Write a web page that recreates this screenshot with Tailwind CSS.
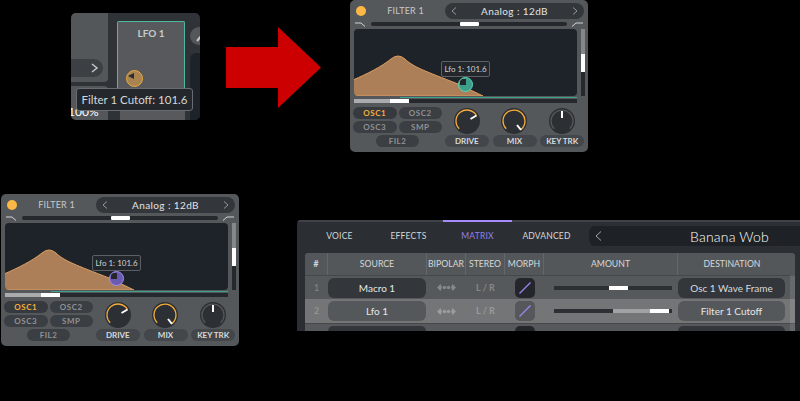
<!DOCTYPE html>
<html lang="en">
<head>
    <meta charset="UTF-8">
    <meta name="viewport" content="width=device-width, initial-scale=1.0">
    <title>Filter modulation</title>
    <script src="https://cdn.jsdelivr.net/npm/@tailwindcss/browser@4"></script>
</head>
<body class="bg-black">
<div class="relative w-[800px] h-[401px] overflow-hidden bg-black font-['Lato',sans-serif]">

    <!-- Cropped LFO thumbnail -->
    <div class="absolute left-[71px] top-[13px] w-[129px] h-[107px] rounded-[5px] overflow-hidden bg-[#2f3236] flex">
        <div class="w-[37px] shrink-0 flex flex-col">
            <div class="h-[69px] bg-[#54575a] rounded-br-[4px] pt-[46px]">
                <div class="h-[18px] w-[32px] bg-[#3c3f43] rounded-r-full flex items-center justify-end pr-[4px]">
                    <svg width="8" height="10" viewBox="0 0 8 10" fill="none" stroke="#c4c6c8" stroke-width="1.5"><path d="M1 1l5 4-5 4"/></svg>
                </div>
            </div>
            <div class="h-[34px] mt-[4px] bg-[#54575a] rounded-tr-[4px] flex items-end text-[12px] leading-[14px] text-white pb-[1px] -ml-[3px]">100%</div>
        </div>
        <div class="w-[9px] shrink-0"></div>
        <div class="w-[68px] shrink-0 mt-[8px] flex flex-col">
            <div class="h-[67px] border border-b-0 border-[#4fb8a2] rounded-t-[2px] bg-[#57595c] flex flex-col items-center">
                <div class="text-[10px] leading-[12px] font-bold text-[#c8cacc] mt-[5px]">LFO 1</div>
                <div class="self-start ml-[8px] mt-[31px] w-[17px] h-[17px] rounded-full border border-[#e8a93f] bg-[#a98450] relative overflow-hidden">
                    <div class="absolute left-[1px] top-[2px] w-0 h-0 border-y-[3px] border-y-transparent border-r-[6px] border-r-[#2a2d31]"></div>
                </div>
            </div>
            <div class="flex-1 bg-[#57595c] ml-[3px]"></div>
        </div>
        <div class="flex-1 pl-[5px] flex flex-col">
            <div class="h-[18px] w-[16px] rounded-l-full bg-[#54575a] mt-[14px] flex items-center justify-end">
                <svg width="10" height="12" viewBox="0 0 10 12" fill="none" stroke="#c4c6c8" stroke-width="2"><path d="M1 11l5-6"/><circle cx="7" cy="3" r="2"/></svg>
            </div>
            <div class="flex-1 mt-[8px] bg-[#1e2329] rounded-tl-[6px]"></div>
        </div>
        <div class="absolute left-[5px] top-[75px] h-[23px] w-[117px] rounded-[3px] border border-[#696c70] bg-[#24282d] text-[#d5d7d9] text-[11.5px] leading-[21px] text-center whitespace-nowrap">Filter 1 Cutoff: 101.6</div>
    </div>

    <!-- Red arrow -->
    <svg class="absolute left-[226px] top-[27px]" width="96" height="81" viewBox="0 0 96 81"><path d="M0 20h52V0l43 40.5L52 81V61H0z" fill="#cc0000"/></svg>

    <!-- Filter panel, teal modulation -->
    <div class="absolute left-[350px] top-0 w-[238px] h-[152px] rounded-[5px] bg-[#55585b] flex flex-col">
        <div class="flex items-center h-[16px] mt-[3px] pl-[6px] pr-[4px]">
            <div class="w-[10px] h-[10px] rounded-full bg-[#fdb744] shrink-0"></div>
            <div class="w-[79px] text-center text-[9px] tracking-[0.2px] text-[#c7c9cb]">FILTER 1</div>
            <div class="flex-1 h-[16px] rounded-full bg-[#33373b] flex items-center justify-between px-[6px] text-[#e2e3e4] text-[10px] tracking-[0.4px]">
                <svg width="6" height="8" viewBox="0 0 6 8" fill="none" stroke="#94979a"><path d="M5 .5L1 4l4 3.500"/></svg>
                <span>Analog : 12dB</span>
                <svg width="6" height="8" viewBox="0 0 6 8" fill="none" stroke="#94979a"><path d="M1 .5L5 4 1 7.500"/></svg>
            </div>
        </div>
        <div class="flex items-center h-[10px] pl-[5px] pr-[5px] gap-[5px]">
            <svg width="11" height="6" viewBox="0 0 11 6" fill="none" stroke="#d0d2d4"><path d="M0 2h6l4 3.500"/></svg>
            <div class="flex-1 h-[4px] bg-[#25282c] rounded-full flex justify-center"><div class="w-[19px] h-[4px] bg-white rounded-[1px]"></div></div>
            <svg width="11" height="6" viewBox="0 0 11 6" fill="none" stroke="#d0d2d4"><path d="M0 5.500L4 2h7"/></svg>
        </div>
        <div class="flex pl-[4px] pr-[3px] gap-[4px]">
            <div class="relative w-[223px] h-[67px] rounded-[4px] bg-[#1e2329] overflow-hidden">
                <svg class="absolute inset-0" width="223" height="67" viewBox="0 0 223 67"><path d="M-1 51C13 45 27 38 37 30Q44 24 51 30C59 38 71 42 104 55L129 67H-1z" fill="#ad7f58" stroke="#dd9f62"/></svg>
                <div class="absolute left-[87px] top-[32px] w-[49px] h-[16px] rounded-[2px] border border-[#5c6064] bg-[#23272c] text-[#cfd1d3] text-[8px] leading-[14px] text-center whitespace-nowrap">Lfo 1: 101.6</div>
                <div class="absolute left-[104px] top-[48px] w-[15px] h-[15px] rounded-full border border-[#5cd6bc] bg-[#3d9f8a] overflow-hidden">
                    <div class="absolute left-[1px] top-[1px] w-[6px] h-[6px] bg-[#23272c]"></div>
                </div>
            </div>
            <div class="w-[4px] h-[67px] bg-[#25282c] flex flex-col">
                <div class="h-[25px] bg-[#85888b]"></div>
                <div class="h-[18px] bg-white"></div>
            </div>
        </div>
        <div class="ml-[50px] mr-[11px] h-[1px] mt-[1px] bg-[#3fa08c]"></div>
        <div class="ml-[4px] mr-[11px] h-[4px] mt-[1px] bg-[#25282c] flex">
            <div class="w-[36px] bg-[#a9abad]"></div>
            <div class="w-[19px] bg-white"></div>
        </div>
        <div class="flex pl-[3px] pr-[4px] mt-[4px]">
            <div class="w-[89px] shrink-0 grid grid-cols-2 gap-x-[2px] gap-y-[2px] text-[8px] font-bold tracking-[0.5px] text-center leading-[12px] text-[#8f9295]">
                <div class="h-[12px] rounded-full bg-[#36393d] text-[#f5ae3b]">OSC1</div>
                <div class="h-[12px] rounded-full bg-[#3b3e42]">OSC2</div>
                <div class="h-[12px] rounded-full bg-[#3b3e42]">OSC3</div>
                <div class="h-[12px] rounded-full bg-[#3b3e42]">SMP</div>
                <div class="h-[12px] rounded-full bg-[#3b3e42] col-span-2 w-[43px] justify-self-center">FIL2</div>
            </div>
            <div class="flex-1 ml-[3px] grid grid-cols-3 gap-x-[4px] text-center">
                <div class="flex flex-col items-center">
                    <svg width="28" height="28" viewBox="0 0 28 28" fill="none"><circle cx="14" cy="14" r="13" fill="#2c2f33"/><path d="M6.200 21.800A11 11 0 1 1 23.500 8.500" stroke="#f5ae3b" stroke-width="1.300"/><path d="M17.500 12l6-3.500" stroke="#fff" stroke-width="2"/></svg>
                    <div class="w-[44px] h-[12px] rounded-full bg-[#43464a] text-[8px] font-bold leading-[12px] text-[#d8dadc]">DRIVE</div>
                </div>
                <div class="flex flex-col items-center">
                    <svg width="28" height="28" viewBox="0 0 28 28" fill="none"><circle cx="14" cy="14" r="13" fill="#2c2f33"/><path d="M6.200 21.800A11 11 0 1 1 21 22.500" stroke="#f5ae3b" stroke-width="1.300"/><path d="M17 18l4 5" stroke="#fff" stroke-width="2"/></svg>
                    <div class="w-[44px] h-[12px] rounded-full bg-[#43464a] text-[8px] font-bold leading-[12px] text-[#d8dadc]">MIX</div>
                </div>
                <div class="flex flex-col items-center">
                    <svg width="28" height="28" viewBox="0 0 28 28" fill="none"><circle cx="14" cy="14" r="13" fill="#2c2f33"/><path d="M6.200 21.800A11 11 0 1 1 21.800 21.800" stroke="#54575a" stroke-width="1.300"/><path d="M14 4v7" stroke="#fff" stroke-width="2"/></svg>
                    <div class="w-[44px] h-[12px] rounded-full bg-[#43464a] text-[8px] font-bold leading-[12px] text-[#d8dadc]">KEY TRK</div>
                </div>
            </div>
        </div>
    </div>

    <!-- Filter panel, purple modulation -->
    <div class="absolute left-[1px] top-[194px] w-[238px] h-[152px] rounded-[5px] bg-[#55585b] flex flex-col">
        <div class="flex items-center h-[16px] mt-[3px] pl-[6px] pr-[4px]">
            <div class="w-[10px] h-[10px] rounded-full bg-[#fdb744] shrink-0"></div>
            <div class="w-[79px] text-center text-[9px] tracking-[0.2px] text-[#c7c9cb]">FILTER 1</div>
            <div class="flex-1 h-[16px] rounded-full bg-[#33373b] flex items-center justify-between px-[6px] text-[#e2e3e4] text-[10px] tracking-[0.4px]">
                <svg width="6" height="8" viewBox="0 0 6 8" fill="none" stroke="#94979a"><path d="M5 .5L1 4l4 3.500"/></svg>
                <span>Analog : 12dB</span>
                <svg width="6" height="8" viewBox="0 0 6 8" fill="none" stroke="#94979a"><path d="M1 .5L5 4 1 7.500"/></svg>
            </div>
        </div>
        <div class="flex items-center h-[10px] pl-[5px] pr-[5px] gap-[5px]">
            <svg width="11" height="6" viewBox="0 0 11 6" fill="none" stroke="#d0d2d4"><path d="M0 2h6l4 3.500"/></svg>
            <div class="flex-1 h-[4px] bg-[#25282c] rounded-full flex justify-center"><div class="w-[19px] h-[4px] bg-white rounded-[1px]"></div></div>
            <svg width="11" height="6" viewBox="0 0 11 6" fill="none" stroke="#d0d2d4"><path d="M0 5.500L4 2h7"/></svg>
        </div>
        <div class="flex pl-[4px] pr-[3px] gap-[4px]">
            <div class="relative w-[223px] h-[67px] rounded-[4px] bg-[#1e2329] overflow-hidden">
                <svg class="absolute inset-0" width="223" height="67" viewBox="0 0 223 67"><path d="M-1 51C13 45 27 38 37 30Q44 24 51 30C59 38 71 42 104 55L129 67H-1z" fill="#ad7f58" stroke="#dd9f62"/></svg>
                <div class="absolute left-[87px] top-[32px] w-[49px] h-[16px] rounded-[2px] border border-[#5c6064] bg-[#23272c] text-[#cfd1d3] text-[8px] leading-[14px] text-center whitespace-nowrap">Lfo 1: 101.6</div>
                <div class="absolute left-[104px] top-[48px] w-[15px] h-[15px] rounded-full border border-[#a48ef0] bg-[#6a5ab0] overflow-hidden">
                    <div class="absolute left-[1px] top-[1px] w-[6px] h-[6px] bg-[#23272c]"></div>
                </div>
            </div>
            <div class="w-[4px] h-[67px] bg-[#25282c] flex flex-col">
                <div class="h-[25px] bg-[#85888b]"></div>
                <div class="h-[18px] bg-white"></div>
            </div>
        </div>
        <div class="ml-[50px] mr-[11px] h-[1px] mt-[1px] bg-[#3fa08c]"></div>
        <div class="ml-[4px] mr-[11px] h-[4px] mt-[1px] bg-[#25282c] flex">
            <div class="w-[36px] bg-[#a9abad]"></div>
            <div class="w-[19px] bg-white"></div>
        </div>
        <div class="flex pl-[3px] pr-[4px] mt-[4px]">
            <div class="w-[89px] shrink-0 grid grid-cols-2 gap-x-[2px] gap-y-[2px] text-[8px] font-bold tracking-[0.5px] text-center leading-[12px] text-[#8f9295]">
                <div class="h-[12px] rounded-full bg-[#36393d] text-[#f5ae3b]">OSC1</div>
                <div class="h-[12px] rounded-full bg-[#3b3e42]">OSC2</div>
                <div class="h-[12px] rounded-full bg-[#3b3e42]">OSC3</div>
                <div class="h-[12px] rounded-full bg-[#3b3e42]">SMP</div>
                <div class="h-[12px] rounded-full bg-[#3b3e42] col-span-2 w-[43px] justify-self-center">FIL2</div>
            </div>
            <div class="flex-1 ml-[3px] grid grid-cols-3 gap-x-[4px] text-center">
                <div class="flex flex-col items-center">
                    <svg width="28" height="28" viewBox="0 0 28 28" fill="none"><circle cx="14" cy="14" r="13" fill="#2c2f33"/><path d="M6.200 21.800A11 11 0 1 1 23.500 8.500" stroke="#f5ae3b" stroke-width="1.300"/><path d="M17.500 12l6-3.500" stroke="#fff" stroke-width="2"/></svg>
                    <div class="w-[44px] h-[12px] rounded-full bg-[#43464a] text-[8px] font-bold leading-[12px] text-[#d8dadc]">DRIVE</div>
                </div>
                <div class="flex flex-col items-center">
                    <svg width="28" height="28" viewBox="0 0 28 28" fill="none"><circle cx="14" cy="14" r="13" fill="#2c2f33"/><path d="M6.200 21.800A11 11 0 1 1 21 22.500" stroke="#f5ae3b" stroke-width="1.300"/><path d="M17 18l4 5" stroke="#fff" stroke-width="2"/></svg>
                    <div class="w-[44px] h-[12px] rounded-full bg-[#43464a] text-[8px] font-bold leading-[12px] text-[#d8dadc]">MIX</div>
                </div>
                <div class="flex flex-col items-center">
                    <svg width="28" height="28" viewBox="0 0 28 28" fill="none"><circle cx="14" cy="14" r="13" fill="#2c2f33"/><path d="M6.200 21.800A11 11 0 1 1 21.800 21.800" stroke="#54575a" stroke-width="1.300"/><path d="M14 4v7" stroke="#fff" stroke-width="2"/></svg>
                    <div class="w-[44px] h-[12px] rounded-full bg-[#43464a] text-[8px] font-bold leading-[12px] text-[#d8dadc]">KEY TRK</div>
                </div>
            </div>
        </div>
    </div>

    <!-- Modulation matrix -->
    <div class="absolute left-[297px] top-[220px] w-[503px] h-[111px] bg-[#2b2e32] rounded-tl-[4px] overflow-hidden flex flex-col">
        <div class="flex h-[2px] bg-[#3f4246]">
            <div class="w-[146px]"></div>
            <div class="w-[69px] bg-[#a78bfa]"></div>
        </div>
        <div class="flex items-center h-[28px] pl-[8px] text-[8.5px] tracking-[0.2px] text-[#d5d7d9]">
            <div class="w-[69px] text-center">VOICE</div>
            <div class="w-[69px] text-center">EFFECTS</div>
            <div class="w-[69px] text-center text-[#9580e6]">MATRIX</div>
            <div class="w-[69px] text-center">ADVANCED</div>
            <div class="ml-[8px] flex-1 h-[20px] rounded-l-[6px] bg-[#1e2226] flex items-center pl-[6px] text-white text-[14px] font-light tracking-[0.2px]">
                <svg width="7" height="10" viewBox="0 0 7 10" fill="none" stroke="#a4a7aa"><path d="M6 .5L1 5l5 4.500"/></svg>
                <span class="ml-[88px]">Banana Wob</span>
            </div>
        </div>
        <div class="relative ml-[8px] mt-[3px] w-[490px] flex-1 rounded-t-[3px] overflow-hidden flex flex-col text-center">
            <div class="grid grid-cols-[23px_99px_39px_39px_39px_134px_117px] h-[22px] bg-[#54575a] text-[8.7px] leading-[22px] text-[#d5d7d9] divide-x divide-[#63666a]">
                <div class="font-bold">#</div><div>SOURCE</div><div>BIPOLAR</div><div>STEREO</div><div>MORPH</div><div>AMOUNT</div><div class="pr-[9px]">DESTINATION</div>
            </div>
            <div class="grid grid-cols-[23px_99px_39px_39px_39px_134px_117px] items-center h-[24px] bg-[#56595c] border-t border-[#45484b] text-[#d8dadc]">
                <div class="text-[9px] text-[#85888b]">1</div>
                <div class="h-[20px] mr-[1px] rounded-[6px] bg-[#33373b] text-[10px] leading-[20px] text-[#e5e6e7]">Macro 1</div>
                <div class="flex justify-center"><svg width="19" height="7" viewBox="0 0 19 7" fill="#85888b"><path d="M0 3.500L3.500 0 5 3.500 3.500 7zM14 3.500L15.500 0 19 3.500 15.500 7z"/><circle cx="7.500" cy="3.500" r="1.800"/><circle cx="11.500" cy="3.500" r="1.800"/></svg></div>
                <div class="text-[9px] font-bold text-[#85888b]">L / R</div>
                <div class="flex justify-center"><div class="w-[20px] h-[20px] rounded-[5px] bg-[#23272c] flex items-center justify-center"><svg width="14" height="14" viewBox="0 0 14 14" stroke="#9d85ee" stroke-width="1.200"><path d="M1.500 12.500l11-11"/></svg></div></div>
                <div class="pl-[10px]"><div class="w-[118px] h-[4px] bg-[#2c2f33] flex"><div class="ml-[55px] w-[19px] bg-white"></div></div></div>
                <div class="h-[20px] mr-[10px] rounded-[6px] bg-[#33373b] text-[10px] leading-[20px] text-[#d8dadc]">Osc 1 Wave Frame</div>
            </div>
            <div class="grid grid-cols-[23px_99px_39px_39px_39px_134px_117px] items-center h-[24px] bg-[#737577] text-[#d8dadc]">
                <div class="text-[9px] text-[#999b9d]">2</div>
                <div class="h-[20px] mr-[1px] rounded-[6px] bg-[#55585b] text-[10px] leading-[20px] text-[#e5e6e7]">Lfo 1</div>
                <div class="flex justify-center"><svg width="19" height="7" viewBox="0 0 19 7" fill="#999b9d"><path d="M0 3.500L3.500 0 5 3.500 3.500 7zM14 3.500L15.500 0 19 3.500 15.500 7z"/><circle cx="7.500" cy="3.500" r="1.800"/><circle cx="11.500" cy="3.500" r="1.800"/></svg></div>
                <div class="text-[9px] font-bold text-[#999b9d]">L / R</div>
                <div class="flex justify-center"><div class="w-[20px] h-[20px] rounded-[5px] bg-[#55585b] flex items-center justify-center"><svg width="14" height="14" viewBox="0 0 14 14" stroke="#9d85ee" stroke-width="1.200"><path d="M1.500 12.500l11-11"/></svg></div></div>
                <div class="pl-[10px]"><div class="w-[118px] h-[4px] bg-[#2c2f33] flex"><div class="ml-[59px] w-[37px] bg-[#a0a2a4]"></div><div class="w-[19px] bg-white"></div></div></div>
                <div class="h-[20px] mr-[10px] rounded-[6px] bg-[#55585b] text-[10px] leading-[20px] text-[#e5e6e7]">Filter 1 Cutoff</div>
            </div>
            <div class="grid grid-cols-[23px_99px_39px_39px_39px_134px_117px] flex-1 bg-[#56595c] border-t border-[#45484b] pt-[2px]">
                <div></div>
                <div class="mr-[1px] rounded-t-[6px] bg-[#33373b]"></div>
                <div></div><div></div>
                <div class="flex justify-center"><div class="w-[20px] rounded-t-[5px] bg-[#23272c]"></div></div>
                <div></div>
                <div class="mr-[10px] rounded-t-[6px] bg-[#33373b]"></div>
            </div>
            <!-- scrollbar over the table rows -->
            <div class="absolute right-0 top-[22px] bottom-0 w-[5px] bg-white/10"></div>
        </div>
    </div>
</div>
</body>
</html>
